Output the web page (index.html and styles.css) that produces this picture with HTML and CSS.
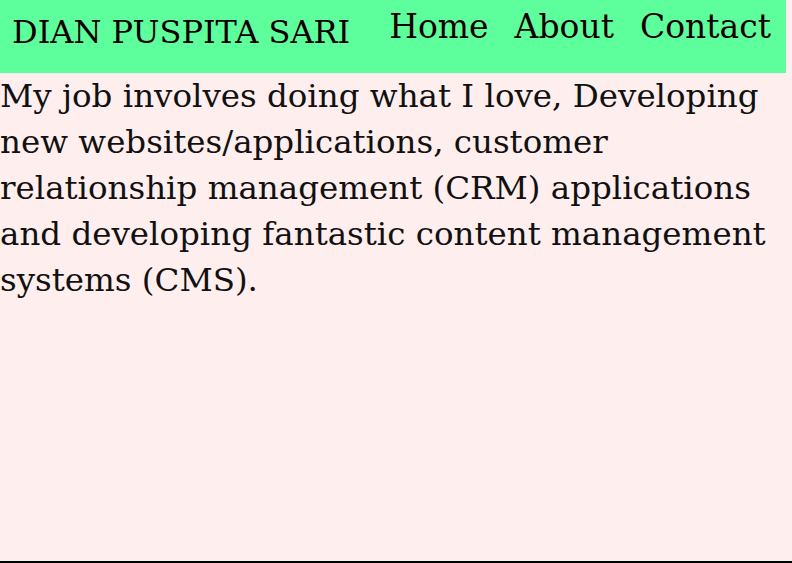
FILE: index.html
```html
<!DOCTYPE html>
<html>
<head>
<meta charset="utf-8">
<link rel="stylesheet" href="styles.css">
</head>
<body>
<div class="page">
  <header class="header">
    <div class="brand">DIAN PUSPITA SARI</div>
    <nav class="nav">
      <a class="nav-link" href="#">Home</a>
      <a class="nav-link" href="#">About</a>
      <a class="nav-link" href="#">Contact</a>
    </nav>
  </header>
  <main class="content">
    <p class="intro">My job involves doing what I love, Developing new websites/applications, customer relationship management (CRM) applications and developing fantastic content management systems (CMS).</p>
  </main>
</div>
</body>
</html>
```
FILE: styles.css
```css
html, body {
  margin: 0;
  padding: 0;
  background: #ffeeee;
}
.page {
  height: 561px;
  border-bottom: 2px solid #000;
  font-family: "Roboto Slab", "DejaVu Serif", serif;
  color: #111;
}
.header {
  width: 786px;
  height: 73px;
  background: #5cff9c;
  display: flex;
  align-items: flex-start;
  justify-content: space-between;
  box-sizing: border-box;
  padding: 0 15px 0 12px;
}
.brand {
  font-size: 32px;
  line-height: 40px;
  padding-top: 12px;
  color: #110000;
}
.nav {
  display: flex;
  gap: 26px;
  padding-top: 7px;
}
.nav-link {
  font-size: 33px;
  line-height: 40px;
  color: #1a0000;
  text-decoration: none;
}
.content {
  width: 786px;
}
.intro {
  margin: 0;
  font-size: 32.5px;
  line-height: 46px;
}
```
